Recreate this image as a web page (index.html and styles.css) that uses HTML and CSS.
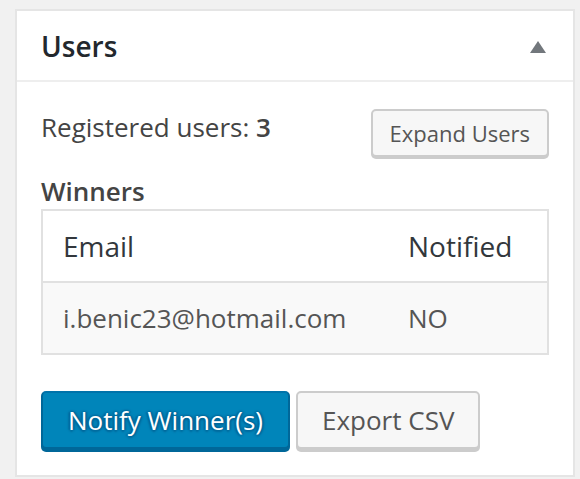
FILE: index.html
```html
<!DOCTYPE html>
<html>
<head>
<meta charset="utf-8">
<link rel="stylesheet" href="styles.css">
</head>
<body>
<div class="postbox">
  <div class="postbox-header">
    <h2 class="hndle">Users</h2>
    <svg class="toggle" width="16" height="12" viewBox="0 0 16 12"><polygon points="8,0 16,12 0,12" fill="#72777c"/></svg>
  </div>
  <div class="inside">
    <div class="reg-row">
      <p class="reg">Registered users: <strong>3</strong></p>
      <button class="button">Expand Users</button>
    </div>
    <h3 class="winners">Winners</h3>
    <div class="wtable">
      <div class="cell head c1">Email</div>
      <div class="cell head c2">Notified</div>
      <div class="cell body c1">i.benic23@hotmail.com</div>
      <div class="cell body c2">NO</div>
    </div>
    <div class="actions">
      <button class="button button-primary big">Notify Winner(s)</button>
      <button class="button big export">Export CSV</button>
    </div>
  </div>
</div>
</body>
</html>
```
FILE: styles.css
```css
html, body {
  margin: 0;
  padding: 0;
  background: #f1f1f1;
  font-family: "Open Sans", "Noto Sans", sans-serif;
}
.postbox {
  margin: 9px 0 0 15px;
  width: 560px;
  height: 468px;
  box-sizing: border-box;
  background: #fff;
  border: 2px solid #e5e5e5;
}
.postbox-header {
  height: 69px;
  border-bottom: 2px solid #eeeeee;
  display: flex;
  align-items: center;
  justify-content: space-between;
  padding: 0 27px 0 24px;
}
.hndle {
  margin: 0;
  font-size: 28px;
  font-weight: 600;
  color: #23282d;
  line-height: normal;
}
.toggle {
  margin-top: 3px;
  display: block;
}
.inside {
  padding: 27px 24px 0 24px;
}
.reg-row {
  display: flex;
  justify-content: space-between;
  align-items: flex-start;
}
.reg {
  margin: 0;
  font-size: 26px;
  line-height: 36px;
  color: #444;
}
.reg strong {
  font-weight: 600;
}
.button {
  font-family: "Open Sans", "Noto Sans", sans-serif;
  font-size: 22px;
  height: 48px;
  padding: 0 17px;
  color: #555;
  background: #f7f7f7;
  border: 2px solid #cccccc;
  border-radius: 5px;
  box-shadow: 0 2px 0 #cccccc;
  box-sizing: border-box;
  line-height: 44px;
  cursor: pointer;
}
.winners {
  margin: 19px 0 3px;
  font-size: 26px;
  line-height: 30px;
  font-weight: 600;
  color: #444;
}
.wtable {
  display: grid;
  grid-template-columns: 345px 1fr;
  border: 2px solid #e1e1e1;
}
.cell {
  height: 70px;
  display: flex;
  align-items: center;
  padding-left: 20px;
  font-size: 26px;
}
.cell.head {
  font-size: 28px;
  color: #32373c;
  background: #fff;
  border-bottom: 2px solid #e1e1e1;
}
.cell.body {
  color: #555;
  background: #f9f9f9;
}
.actions {
  margin-top: 36px;
  display: flex;
  gap: 6px;
}
.button.big {
  height: 58px;
  font-size: 26px;
  line-height: 54px;
  padding: 0 25px;
  box-shadow: 0 3px 0 #cccccc;
}
.button.big.export {
  padding: 0 24px;
}
.button-primary.big {
  background: #0085ba;
  border-color: #0073aa #006799 #006799;
  box-shadow: 0 3px 0 #006799;
  color: #fff;
  text-shadow: 0 -1px 2px #006799, 2px 0 2px #006799, 0 2px 2px #006799, -2px 0 2px #006799;
}
```
